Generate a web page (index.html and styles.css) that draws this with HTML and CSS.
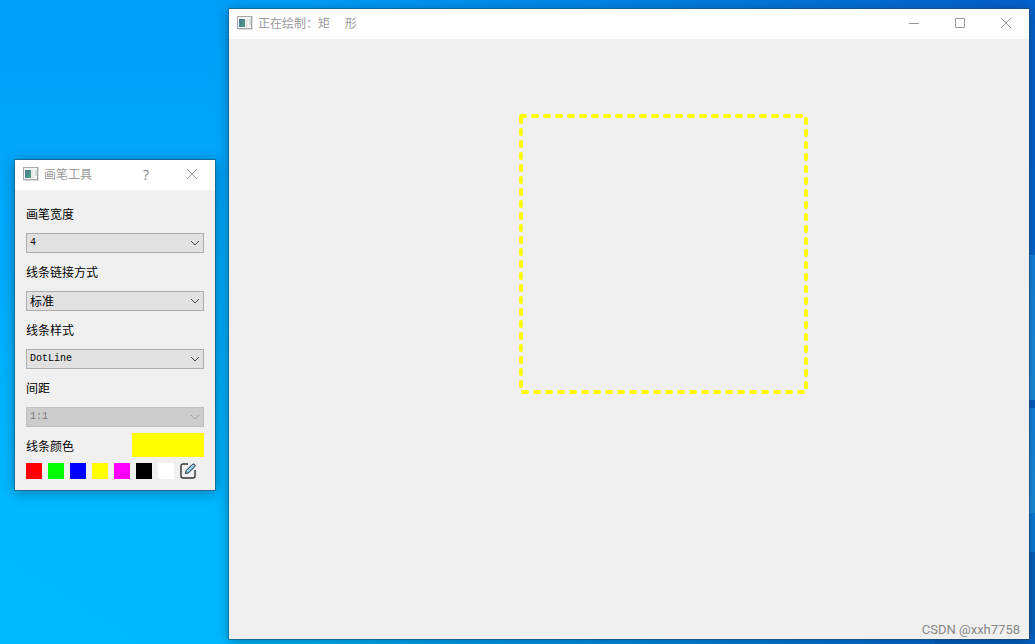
FILE: index.html
```html
<!DOCTYPE html>
<html lang="zh-CN">
  <head>
    <meta charset="UTF-8" />
    <meta name="viewport" content="width=device-width, initial-scale=1.0" />
    <title>画笔工具</title>
    <link rel="stylesheet" href="styles.css" />
  </head>
  <body>
    <svg class="wallpaper" viewBox="0 0 100 644" preserveAspectRatio="xMaxYMin slice" aria-hidden="true">
      <defs>
        <linearGradient id="pane" x1="0" y1="0" x2="0" y2="1">
          <stop offset="0" stop-color="#1484e0" />
          <stop offset="1" stop-color="#1c8ee0" />
        </linearGradient>
      </defs>
      <path d="M0 160L100 168V255H0z" fill="#0566d0" />
      <path d="M0 255H100V400H0z" fill="url(#pane)" />
      <path d="M0 400H100V408H0z" fill="#0560c4" />
      <path d="M0 408H100V513H0z" fill="url(#pane)" />
      <path d="M0 513H100V552H0z" fill="#0b7bdb" />
      <path d="M0 552H100V644H0z" fill="#0561c0" />
    </svg>

    <main class="window main-window">
      <header class="titlebar">
        <svg class="app-icon" viewBox="0 0 16 14" aria-hidden="true">
          <defs>
            <linearGradient id="screen" x1="0" y1="0" x2="1" y2="1">
              <stop offset="0" stop-color="#4d7399" />
              <stop offset="1" stop-color="#4aa57a" />
            </linearGradient>
          </defs>
          <rect x="0" y="0" width="16" height="14" fill="#d8d8d8" />
          <rect x="0" y="0" width="15" height="13" fill="#a6a9ad" />
          <rect x="1" y="1" width="13" height="11" fill="#f4f4f4" />
          <rect x="2" y="3" width="6" height="8" fill="url(#screen)" />
          <rect x="8" y="3" width="3" height="8" fill="#e8e8e8" />
          <rect x="12" y="3" width="2" height="6" fill="#d0dcd4" />
        </svg>
        <h1 class="title">正在绘制：矩&#12288; 形</h1>
        <button class="win-btn" aria-label="最小化">
          <svg viewBox="0 0 10 10"><path d="M0 5.5H10" /></svg>
        </button>
        <button class="win-btn" aria-label="最大化">
          <svg viewBox="0 0 10 10"><path d="M.5 .5H9.5V9.5H.5z" /></svg>
        </button>
        <button class="win-btn" aria-label="关闭">
          <svg viewBox="0 0 10 10"><path d="M0 0L10 10M10 0L0 10" /></svg>
        </button>
      </header>
      <svg class="canvas">
        <rect class="shape" x="292" y="77" width="285" height="276" />
      </svg>
      <p class="watermark">CSDN @xxh7758</p>
    </main>

    <section class="window tool-window">
      <header class="titlebar">
        <svg class="app-icon" viewBox="0 0 16 14" aria-hidden="true">
          <rect x="0" y="0" width="16" height="14" fill="#d8d8d8" />
          <rect x="0" y="0" width="15" height="13" fill="#a6a9ad" />
          <rect x="1" y="1" width="13" height="11" fill="#f4f4f4" />
          <rect x="2" y="3" width="6" height="8" fill="url(#screen)" />
          <rect x="8" y="3" width="3" height="8" fill="#e8e8e8" />
          <rect x="12" y="3" width="2" height="6" fill="#d0dcd4" />
        </svg>
        <h2 class="title">画笔工具</h2>
        <button class="win-btn">?</button>
        <button class="win-btn" aria-label="关闭">
          <svg viewBox="0 0 10 10"><path d="M0 0L10 10M10 0L0 10" /></svg>
        </button>
      </header>

      <form class="options">
        <label class="label" for="penWidth">画笔宽度</label>
        <div class="combo">
          <select class="select mono" id="penWidth"><option>4</option></select>
          <svg class="arrow" viewBox="0 0 10 6"><path d="M1 1L5 5L9 1" /></svg>
        </div>

        <label class="label" for="joinStyle">线条链接方式</label>
        <div class="combo">
          <select class="select" id="joinStyle"><option>标准</option></select>
          <svg class="arrow" viewBox="0 0 10 6"><path d="M1 1L5 5L9 1" /></svg>
        </div>

        <label class="label" for="lineStyle">线条样式</label>
        <div class="combo">
          <select class="select mono" id="lineStyle"><option>DotLine</option></select>
          <svg class="arrow" viewBox="0 0 10 6"><path d="M1 1L5 5L9 1" /></svg>
        </div>

        <label class="label" for="spacing">间距</label>
        <div class="combo disabled">
          <select class="select mono" id="spacing" disabled><option>1:1</option></select>
          <svg class="arrow" viewBox="0 0 10 6"><path d="M1 1L5 5L9 1" /></svg>
        </div>

        <div class="color-row">
          <span>线条颜色</span>
          <div class="current-color yellow"></div>
        </div>

        <div class="swatches">
          <button type="button" class="swatch red" aria-label="红"></button>
          <button type="button" class="swatch green" aria-label="绿"></button>
          <button type="button" class="swatch blue" aria-label="蓝"></button>
          <button type="button" class="swatch yellow" aria-label="黄"></button>
          <button type="button" class="swatch magenta" aria-label="品红"></button>
          <button type="button" class="swatch black" aria-label="黑"></button>
          <button type="button" class="swatch white" aria-label="白"></button>
          <button type="button" class="swatch" aria-label="自定义颜色">
            <svg class="edit-icon" viewBox="0 0 16 16">
              <path class="frame" d="M8 1H3Q1 1 1 3V13Q1 15 3 15H13Q15 15 15 13V7" />
              <path class="pen" d="M5.5 10.5L6.2 7.5L12.2 1.5Q13.6 .4 14.8 1.6Q15.6 2.8 14.6 3.9L8.5 9.8Z" />
            </svg>
          </button>
        </div>
      </form>
    </section>
  </body>
</html>
```
FILE: styles.css
```css
* {
  margin: 0;
  padding: 0;
  box-sizing: border-box;
}

body {
  font-family: "Noto Sans CJK SC", sans-serif;
  font-size: 12px;
  color: #000;
  height: 100vh;
  overflow: hidden;
  position: relative;
  background: linear-gradient(to right, transparent 30%, #0562cc 96%), linear-gradient(to bottom left, transparent 70%, rgba(0, 190, 255, 0.3)), linear-gradient(#009ff8, #00b8ff 80%);
}

/* desktop */
.wallpaper {
  position: absolute;
  right: 0;
  top: 0;
  width: 100px;
  height: 100%;
}

/* windows */
.window {
  position: absolute;
  background-color: #f0f0f0;
  display: flex;
  flex-direction: column;
  box-shadow: 0 0 0 1px rgba(40, 70, 90, 0.5), 0 2px 12px rgba(0, 30, 60, 0.45);
}

.main-window {
  left: 229px;
  right: 6px;
  top: 9px;
  bottom: 5px;
}

.tool-window {
  left: 15px;
  top: 160px;
  width: 200px;
}

.titlebar {
  display: flex;
  align-items: center;
  height: 30px;
  padding: 0 0 2px 8px;
  background-color: #fff;
  color: #999;
}

.app-icon {
  width: 16px;
  height: 14px;
}

.title {
  flex: 1;
  margin-left: 5px;
  font-size: 12px;
  font-weight: normal;
  line-height: 18px;
  white-space: pre;
}

.win-btn {
  display: flex;
  justify-content: center;
  align-items: center;
  width: 46px;
  height: 28px;
  border: none;
  background: none;
  color: #888;
  font-family: "Open Sans", sans-serif;
  font-size: 14px;
}

.win-btn svg {
  width: 10px;
  height: 10px;
  fill: none;
  stroke: #999;
}

/* drawing area */
.canvas {
  flex: 1;
  width: 100%;
  min-height: 0;
}

.shape {
  fill: none;
  stroke: #ff0;
  stroke-width: 4;
  stroke-linecap: round;
  stroke-dasharray: 4 8;
}

.watermark {
  position: absolute;
  right: 9px;
  bottom: 1px;
  font-family: Roboto, sans-serif;
  font-size: 13px;
  line-height: 16px;
  color: #888;
}

/* pen options */
.options {
  display: flex;
  flex-direction: column;
  gap: 6px;
  padding: 11px;
}

.label {
  line-height: 26px;
}

.combo {
  display: grid;
  align-items: center;
}

.select {
  grid-area: 1 / 1;
  appearance: none;
  width: 100%;
  height: 20px;
  padding: 0 3px;
  border: 1px solid #adadad;
  border-radius: 0;
  background-color: #e1e1e1;
  color: #000;
  font-family: inherit;
  font-size: 12px;
  line-height: 16px;
}

.mono {
  font-family: "Liberation Mono", monospace;
  font-size: 10px;
}

.arrow {
  grid-area: 1 / 1;
  justify-self: end;
  width: 10px;
  height: 6px;
  margin-right: 4px;
  fill: none;
  stroke: #444;
  pointer-events: none;
}

.disabled .select {
  border-color: #bfbfbf;
  background-color: #ccc;
  color: #787878;
  opacity: 1;
}

.disabled .arrow {
  stroke: #a0a0a0;
}

.color-row {
  display: flex;
  justify-content: space-between;
  align-items: center;
}

.current-color {
  width: 72px;
  height: 24px;
}

.swatches {
  display: flex;
  gap: 6px;
}

.swatch {
  width: 16px;
  height: 16px;
  border: none;
  background: none;
}

.red {
  background-color: #f00;
}

.green {
  background-color: #0f0;
}

.blue {
  background-color: #00f;
}

.yellow {
  background-color: #ff0;
}

.magenta {
  background-color: #f0f;
}

.black {
  background-color: #000;
}

.white {
  background-color: #fff;
}

.edit-icon {
  display: block;
  width: 16px;
  height: 16px;
}

.frame {
  fill: none;
  stroke: #333;
  stroke-width: 1.4;
}

.pen {
  fill: #8fd0f4;
  stroke: #222;
  stroke-width: 1;
}
```
